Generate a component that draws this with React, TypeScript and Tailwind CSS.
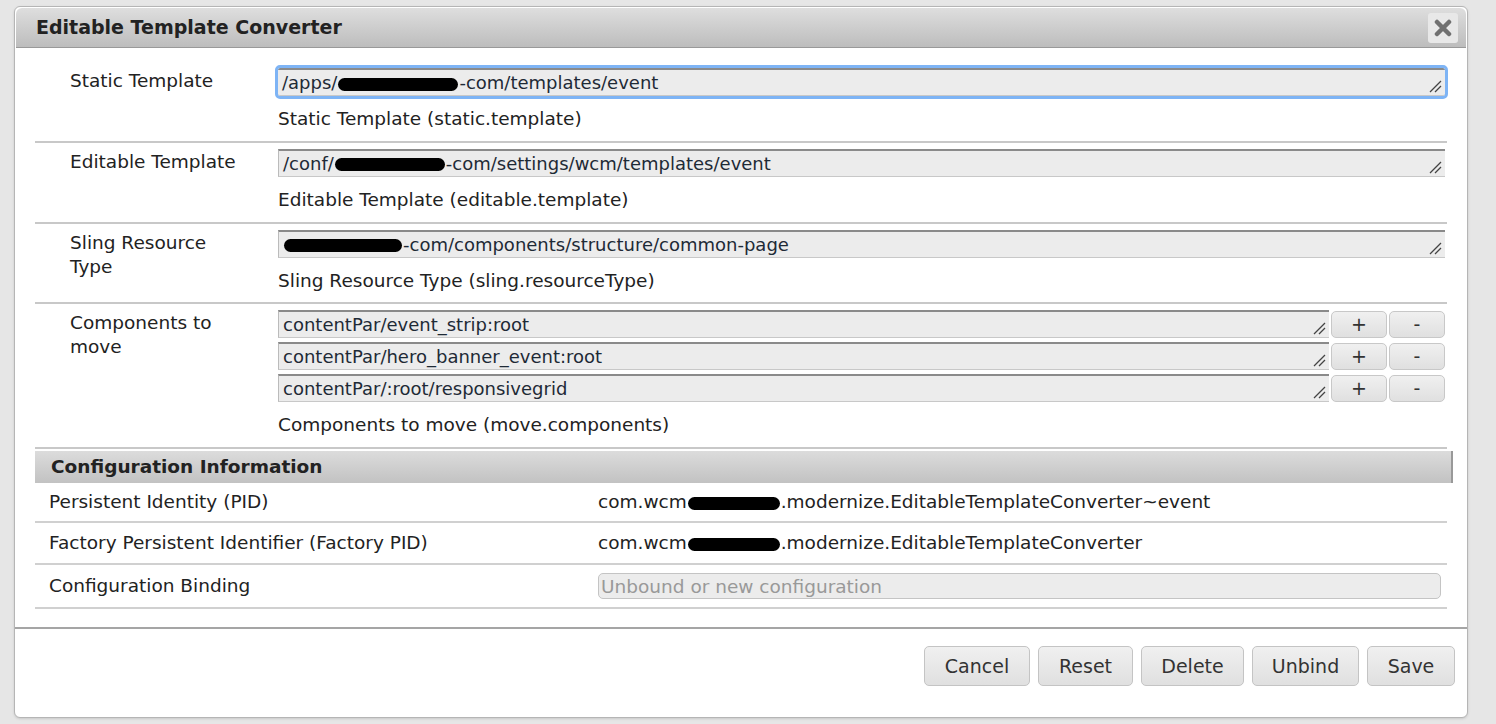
export default function App() {
  const font = { fontFamily: '"DejaVu Sans", Verdana, sans-serif' };
  const Blob = ({ w }: { w: number }) => (
    <span className="inline-block h-[13px] rounded-full bg-black align-middle mx-[1px]" style={{ width: w }} />
  );
  const Field = ({ children, focus }: { children: React.ReactNode; focus?: boolean }) => (
    <div
      className={`relative h-[28px] bg-[#ececec] border-t-2 border-[#8a8a8a] border-b border-b-[#c8c8c8] text-[18px] text-[#1e2a36] px-[4px] leading-[25px] whitespace-nowrap ${
        focus ? "outline-[3px] outline outline-[#7eb4f5] rounded-[2px]" : "border-l border-l-[#bbb]"
      }`}
    >
      {children}
      <svg className="absolute right-[3px] bottom-[2px]" width="14" height="14" viewBox="0 0 14 14">
        <path d="M2 13L13 2M7 13L13 7" stroke="#444" strokeWidth="1.3" />
      </svg>
    </div>
  );
  const Btn = ({ children, w }: { children: React.ReactNode; w: number }) => (
    <button
      className="h-[40px] rounded-[5px] border border-[#c4c4c4] bg-gradient-to-b from-[#f0f0f0] to-[#e0e0e0] text-[19px] text-[#333]"
      style={{ width: w }}
    >
      {children}
    </button>
  );
  const Small = ({ children }: { children: React.ReactNode }) => (
    <button className="w-[56px] h-[27px] rounded-[5px] border border-[#c8c8c8] bg-gradient-to-b from-[#f0f0f0] to-[#e0e0e0] text-[19px] leading-none text-[#333]">
      {children}
    </button>
  );
  const Row = ({ label, children, help }: { label: React.ReactNode; children: React.ReactNode; help: string }) => (
    <div className="flex border-b-2 border-[#c8c8c8] pt-[6px] pb-[8px]">
      <div className="w-[243px] pl-[35px] pt-[1px] text-[18.5px] leading-[24px] text-[#222]">{label}</div>
      <div className="flex-1 pr-[2px]">
        {children}
        <div className="mt-[9px] text-[18.5px] text-[#222]">{help}</div>
      </div>
    </div>
  );
  return (
    <div className="w-[1496px] h-[724px] bg-[#e6e6e6] overflow-hidden relative" style={font}>
      <div className="absolute left-[14px] top-[6px] w-[1454px] h-[712px] bg-white rounded-[6px] border border-[#b5b5b5] shadow">
        <div className="h-[40px] mx-[1px] mt-[1px] rounded-t-[6px] border-b border-[#999] bg-gradient-to-b from-[#dedede] to-[#bdbdbd] flex items-center justify-between pl-[20px] pr-[8px]">
          <span className="text-[19px] font-bold text-[#222]">Editable Template Converter</span>
          <div className="w-[30px] h-[30px] rounded-[3px] bg-[#e8e8e8] flex items-center justify-center">
            <svg width="18" height="18" viewBox="0 0 18 18">
              <path d="M3 3L15 15M15 3L3 15" stroke="#707070" strokeWidth="4.5" strokeLinecap="round" />
            </svg>
          </div>
        </div>
        <div className="mx-[20px] mt-[14px]">
          <Row label="Static Template" help="Static Template (static.template)">
            <Field focus>
              /apps/<Blob w={120} />-com/templates/event
            </Field>
          </Row>
          <Row label="Editable Template" help="Editable Template (editable.template)">
            <Field>
              /conf/<Blob w={110} />-com/settings/wcm/templates/event
            </Field>
          </Row>
          <Row label={<>Sling Resource<br />Type</>} help="Sling Resource Type (sling.resourceType)">
            <Field>
              <Blob w={118} />-com/components/structure/common-page
            </Field>
          </Row>
          <Row label={<>Components to<br />move</>} help="Components to move (move.components)">
            <div className="flex flex-col gap-[4px]">
              {["contentPar/event_strip:root", "contentPar/hero_banner_event:root", "contentPar/:root/responsivegrid"].map((t) => (
                <div key={t} className="flex items-end gap-[2px]">
                  <div className="flex-1">
                    <Field>{t}</Field>
                  </div>
                  <Small>+</Small>
                  <Small>-</Small>
                </div>
              ))}
            </div>
          </Row>
          <div className="h-[32px] mt-[2px] bg-gradient-to-b from-[#dcdcdc] to-[#c2c2c2] border-r-2 border-[#999] -mr-[6px] pl-[16px] flex items-center text-[18.5px] font-bold text-[#222]">
            Configuration Information
          </div>
          <div className="text-[18.5px] text-[#222]">
            <div className="flex h-[40px] items-center border-b-2 border-[#d0d0d0]">
              <div className="w-[563px] pl-[14px]">Persistent Identity (PID)</div>
              <div>com.wcm<Blob w={92} />.modernize.EditableTemplateConverter~event</div>
            </div>
            <div className="flex h-[42px] items-center border-b-2 border-[#d0d0d0]">
              <div className="w-[563px] pl-[14px]">Factory Persistent Identifier (Factory PID)</div>
              <div>com.wcm<Blob w={92} />.modernize.EditableTemplateConverter</div>
            </div>
            <div className="flex h-[44px] items-center border-b-2 border-[#d0d0d0]">
              <div className="w-[563px] pl-[14px]">Configuration Binding</div>
              <div className="flex-1 mr-[6px] h-[26px] rounded-[5px] border border-[#c4c4c4] bg-[#ececec] text-[#999] px-[2px] leading-[26px]">
                Unbound or new configuration
              </div>
            </div>
          </div>
        </div>
        <div className="mt-[18px] border-t-2 border-[#a5a5a5] flex justify-end gap-[8px] pr-[12px] pt-[17px]">
          <Btn w={106}>Cancel</Btn>
          <Btn w={95}>Reset</Btn>
          <Btn w={103}>Delete</Btn>
          <Btn w={107}>Unbind</Btn>
          <Btn w={88}>Save</Btn>
        </div>
      </div>
    </div>
  );
}
